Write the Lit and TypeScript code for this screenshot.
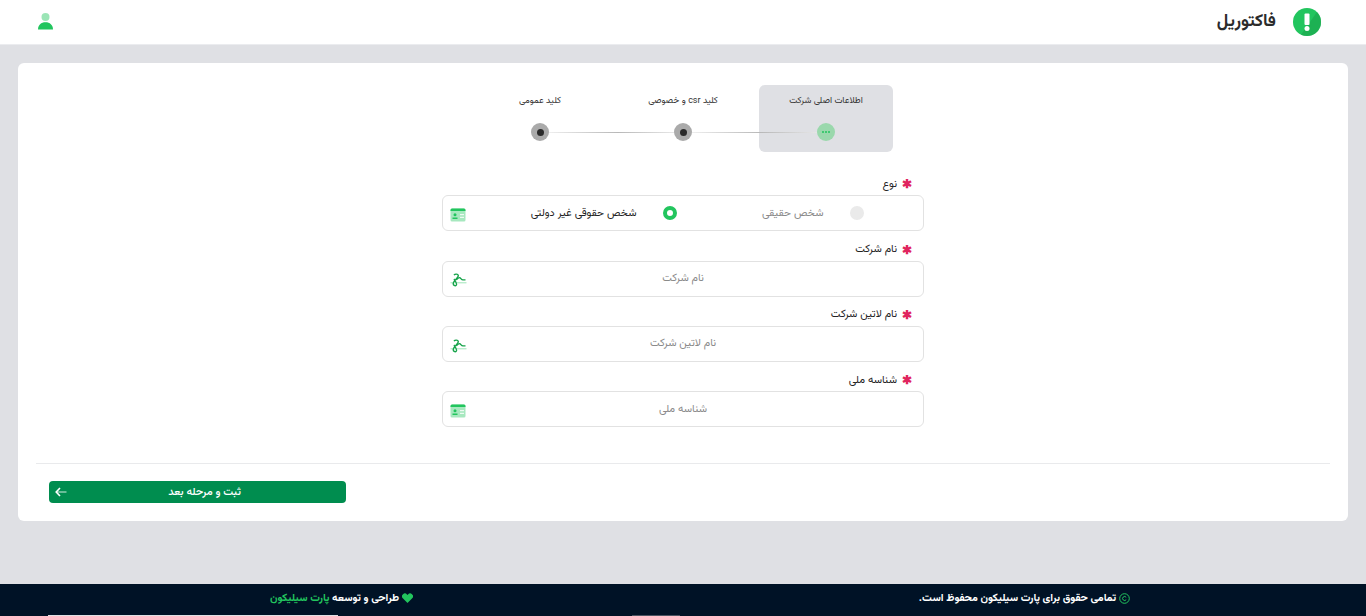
import { LitElement, html, css, svg } from "lit";
import { customElement } from "lit/decorators.js";

const cardIcon = html`<svg class="ficon" width="16" height="14" viewBox="0 0 16 14">
  <rect x="0.5" y="0.5" width="15" height="13" rx="1.5" fill="#22c55e" opacity=".4"/>
  <path d="M.5 3V2A1.5 1.5 0 0 1 2 .5h12A1.5 1.5 0 0 1 15.500 2v1z" fill="#22c55e"/>
  <circle cx="5" cy="6.800" r="1.500" fill="#22c55e"/>
  <rect x="2.500" y="9.500" width="5" height="1.500" fill="#22c55e"/>
  <rect x="10" y="6" width="4" height="1.200" fill="#fff" opacity=".8"/>
  <rect x="10" y="8.800" width="4" height="1.200" fill="#fff" opacity=".8"/>
</svg>`;

const signIcon = html`<svg class="ficon sign" width="17" height="14" viewBox="0 0 17 14" fill="none">
  <path d="M.5 9.800h16" stroke="#22c55e" stroke-width=".8" opacity=".55"/>
  <path d="M4 2.200C5 .7 8 .8 8.300 2.600 8.700 4.800 3.800 7.200 3.300 10c-.4 2.300 1.900 3.500 3 2.100 1.100-1.400-.8-3.900-2.300-6.100" stroke="#16a34a" stroke-width="1.400"/>
  <path d="M6.200 6.800c1.300-1.300 2.700-3 4-1.900 1 1 1.400 2 2.800 2h2.500" stroke="#16a34a" stroke-width="1.400"/>
</svg>`;

const dots = svg`<circle cx="4" cy="7" r="1" fill="#22c55e"/><circle cx="7" cy="7" r="1" fill="#22c55e"/><circle cx="10" cy="7" r="1" fill="#22c55e"/>`;

@customElement("app-root")
export class AppRoot extends LitElement {
  static styles = css`
    :host {
      display: flex;
      flex-direction: column;
      width: 1366px;
      height: 616px;
      overflow: hidden;
      background: #dfe0e4;
      font-family: "Vazirmatn", "Noto Sans Arabic", "DejaVu Sans", sans-serif;
      color: #212529;
      direction: rtl;
    }
    * { box-sizing: border-box; }
    .top {
      height: 45px;
      flex: none;
      background: #fff;
      border-bottom: 1px solid #ebecef;
      display: flex;
      align-items: center;
      justify-content: space-between;
      padding: 0 45px 1px 38px;
    }
    .brand { display: flex; align-items: center; gap: 17px; }
    .brand b { font-size: 17.400px; font-weight: 700; color: #2b2b2b; line-height: 1; }
    .user { display: block; }

    .card {
      margin: 18px 18px 0;
      height: 458px;
      flex: none;
      background: #fff;
      border-radius: 6px;
      display: flex;
      flex-direction: column;
      padding-top: 22px;
    }
    .steps {
      display: flex;
      justify-content: center;
      gap: 9px;
      height: 67px;
      flex: none;
    }
    .step {
      position: relative;
      width: 134px;
      display: flex;
      flex-direction: column;
      align-items: center;
      border-radius: 6px;
      padding-top: 11px;
    }
    .step.active { background: #dfe0e4; }
    .step span { font-size: 9px; line-height: 11px; color: #333; }
    .dot {
      position: relative;
      z-index: 1;
      margin-top: 16px;
      width: 18px;
      height: 18px;
      border-radius: 50%;
      background: #aaa;
      display: flex;
      align-items: center;
      justify-content: center;
    }
    .dot::before {
      content: "";
      width: 7px;
      height: 7px;
      border-radius: 50%;
      background: #2a2a2a;
    }
    .active .dot { background: #9ad8ac; }
    .active .dot::before { display: none; }
    .link {
      position: absolute;
      top: 47px;
      right: 76px;
      width: 125px;
      height: 1px;
      background: linear-gradient(90deg, #eee, #b8b8b8 55%, #e6e6e6);
    }

    .form {
      width: 482px;
      margin: 23.400px auto 0;
      flex: none;
      display: flex;
      flex-direction: column;
    }
    .group { display: flex; flex-direction: column; height: 65.300px; }
    .label {
      height: 20px;
      display: flex;
      align-items: center;
      gap: 5px;
      padding: 0 12px 2px 0;
      font-size: 10.800px;
      color: #222;
    }
    .star { color: #e0245e; font-size: 12px; font-weight: 700; line-height: 1; font-family: "Liberation Sans", sans-serif; }
    .field {
      position: relative;
      height: 36px;
      border: 1px solid #e2e2e2;
      border-radius: 6px;
      background: #fff;
      display: flex;
      align-items: center;
      justify-content: center;
      font-size: 10.800px;
      color: #8a8a8a;
    }
    .ficon { position: absolute; left: 7px; top: 11.600px; }
    .radios { justify-content: flex-start; padding-right: 59px; }
    .opt { width: 187px; display: flex; align-items: center; gap: 26.500px; flex: none; }
    .radio { width: 14px; height: 14px; border-radius: 50%; background: #eaeaea; flex: none; }
    .opt.on { color: #222; }
    .opt.on .radio { background: #fff; border: 4px solid #22c55e; }

    .rule { height: 1px; flex: none; background: #e9eaec; margin: 26.600px 18px 0; }
    .bar { display: flex; justify-content: flex-end; padding: 17px 31px 0; }
    .next {
      width: 297px;
      height: 22px;
      border: 0;
      border-radius: 4px;
      padding: 0 0 0 14px;
      background: #008d4f;
      color: #fff;
      font: 500 11px "Vazirmatn", "Noto Sans Arabic", "DejaVu Sans", sans-serif;
      position: relative;
      display: flex;
      align-items: center;
      justify-content: center;
    }
    .next svg { position: absolute; left: 6px; top: 6px; }

    .foot {
      position: relative;
      margin-top: auto;
      height: 32px;
      flex: none;
      background: #001226;
      display: grid;
      grid-template-columns: 1fr 1fr;
      padding-bottom: 4px;
      align-items: center;
      justify-items: center;
      color: #fff;
      font-size: 10.750px;
      font-weight: 700;
    }
    .foot div { display: flex; align-items: center; gap: 3px; }
    .foot em { font-style: normal; color: #22c55e; }
    .foot i { position: absolute; bottom: 0; height: 1px; }
    .foot .s1 { left: 48px; width: 290px; background: #dfe0e4; }
    .foot .s2 { left: 632px; width: 48px; background: #4a5462; }
  `;

  private step(text: string, active = false, link = false) {
    return html`<div class="step ${active ? "active" : ""}">
      <span>${text}</span>
      <div class="dot">${active ? html`<svg width="14" height="14" viewBox="0 0 14 14">${dots}</svg>` : ""}</div>
      ${link ? html`<i class="link"></i>` : ""}
    </div>`;
  }

  private field(label: string, icon: unknown) {
    return html`<div class="group">
      <div class="label"><span class="star">✱</span><span>${label}</span></div>
      <div class="field"><span>${label}</span>${icon}</div>
    </div>`;
  }

  render() {
    return html`
      <header class="top">
        <div class="brand">
          <svg width="28" height="28" viewBox="0 0 28 28">
            <circle cx="14" cy="14" r="14" fill="#22c55e"/>
            <path d="M14 28A14 14 0 0 0 24 4L8 26.700A14 14 0 0 0 14 28z" fill="#1aa34c" opacity=".6"/>
            <rect x="11.500" y="5.500" width="5" height="11.500" rx="1" fill="#fff"/>
            <circle cx="14" cy="20.500" r="2.500" fill="#fff"/>
          </svg>
          <b>فاکتوریل</b>
        </div>
        <svg class="user" width="15" height="17" viewBox="0 0 15 17">
          <circle cx="7.500" cy="4" r="4" fill="#22c55e" opacity=".45"/>
          <path d="M0 16.500C0 12 3.200 9.300 7.500 9.300S15 12 15 16.500z" fill="#22c55e"/>
        </svg>
      </header>

      <main class="card">
        <div class="steps">
          ${this.step("اطلاعات اصلی شرکت", true, true)}
          ${this.step("کلید csr و خصوصی", false, true)}
          ${this.step("کلید عمومی")}
        </div>
        <div class="form">
          <div class="group">
            <div class="label"><span class="star">✱</span><span>نوع</span></div>
            <div class="field radios">
              <div class="opt"><i class="radio"></i><span>شخص حقیقی</span></div>
              <div class="opt on"><i class="radio"></i><span>شخص حقوقی غیر دولتی</span></div>
              ${cardIcon}
            </div>
          </div>
          ${this.field("نام شرکت", signIcon)}
          ${this.field("نام لاتین شرکت", signIcon)}
          ${this.field("شناسه ملی", cardIcon)}
        </div>
        <div class="rule"></div>
        <div class="bar">
          <button class="next">ثبت و مرحله بعد
            <svg width="12" height="10" viewBox="0 0 12 10" fill="none">
              <path d="M5 1 1.200 5 5 9" stroke="#fff" stroke-width="1.600"/>
              <path d="M2 5h9.500" stroke="#fff" stroke-width="1.400" opacity=".6"/>
            </svg>
          </button>
        </div>
      </main>

      <footer class="foot">
        <div>
          <svg width="11" height="11" viewBox="0 0 11 11" fill="none">
            <circle cx="5.500" cy="5.500" r="4.800" stroke="#22c55e"/>
            <path d="M7.200 4.300a2 2 0 1 0 0 2.400" stroke="#22c55e"/>
          </svg>
          <span>تمامی حقوق برای پارت سیلیکون محفوظ است.</span>
        </div>
        <div>
          <svg width="11" height="10" viewBox="0 0 11 10"><path d="M5.500 10 .8 5.200A2.800 2.800 0 0 1 5 1.400l.5.500.5-.5a2.800 2.800 0 0 1 4.200 3.800z" fill="#22c55e"/></svg>
          <span>طراحی و توسعه <em>پارت سیلیکون</em></span>
        </div>
        <i class="s1"></i><i class="s2"></i>
      </footer>
    `;
  }
}
